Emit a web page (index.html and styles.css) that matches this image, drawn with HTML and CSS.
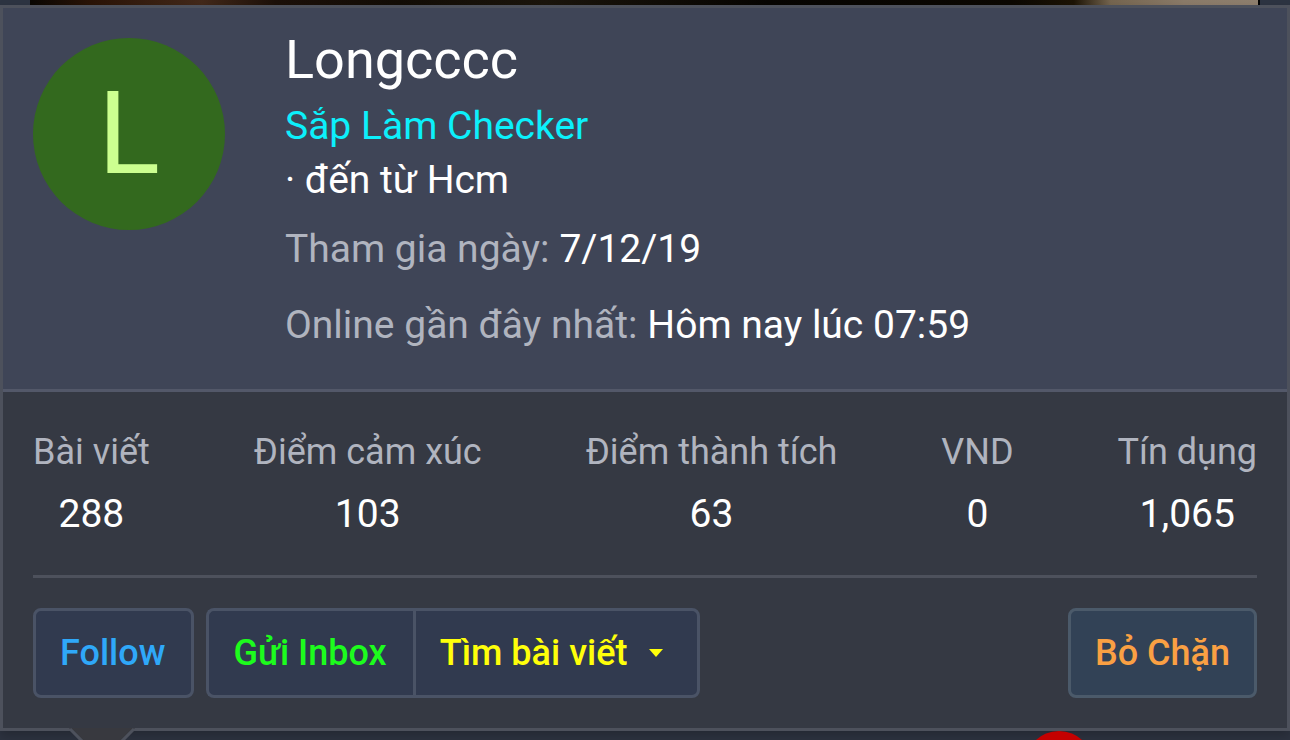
FILE: index.html
```html
<!DOCTYPE html>
<html lang="vi">
<head>
  <meta charset="utf-8">
  <title>Longcccc</title>
  <link rel="stylesheet" href="styles.css">
</head>
<body>
  <div class="cover"><div class="cover-photo"></div></div>
  <div class="memberTooltip">
    <div class="memberTooltip-header">
      <a class="avatar" href="#">L</a>
      <div class="memberTooltip-info">
        <h4 class="memberTooltip-name"><a href="#">Longcccc</a></h4>
        <div class="memberTooltip-title">Sắp Làm Checker</div>
        <div class="memberTooltip-from">· đến từ <a href="#">Hcm</a></div>
        <dl class="pairs">
          <dt>Tham gia ngày:</dt>
          <dd>7/12/19</dd>
        </dl>
        <dl class="pairs">
          <dt>Online gần đây nhất:</dt>
          <dd>Hôm nay lúc 07:59</dd>
        </dl>
      </div>
    </div>
    <div class="memberTooltip-body">
      <div class="stats">
        <dl><dt>Bài viết</dt><dd>288</dd></dl>
        <dl><dt>Điểm cảm xúc</dt><dd>103</dd></dl>
        <dl><dt>Điểm thành tích</dt><dd>63</dd></dl>
        <dl><dt>VND</dt><dd>0</dd></dl>
        <dl><dt>Tín dụng</dt><dd>1,065</dd></dl>
      </div>
      <hr>
      <div class="actions">
        <button class="button follow" type="button">Follow</button>
        <div class="buttonGroup">
          <button class="button inbox" type="button">Gửi Inbox</button>
          <button class="button find" type="button">Tìm bài viết
            <svg class="caret" viewBox="0 0 14 8" width="14" height="8" aria-hidden="true"><path d="M0 0h14L7 8z" fill="currentColor"/></svg>
          </button>
        </div>
        <button class="button block" type="button">Bỏ Chặn</button>
      </div>
    </div>
    <svg class="arrow" viewBox="0 0 66 36" width="66" height="36" aria-hidden="true">
      <path d="M0 0h66L33 33z" fill="#38393f"/>
      <path d="M1 1l32 32L65 1" fill="none" stroke="#4d515c" stroke-width="3"/>
    </svg>
  </div>
  <div class="page">
    <div class="badge"></div>
  </div>
</body>
</html>
```

FILE: styles.css
```css
* {
  box-sizing: border-box;
}
body {
  display: flex;
  flex-direction: column;
  height: 100vh;
  margin: 0;
  overflow: hidden;
  background: #2d3340;
  color: #fff;
  font-family: Roboto, "Noto Sans", sans-serif;
  font-size: 39px;
  line-height: 54px;
}
a {
  color: inherit;
  text-decoration: none;
}
h4, dl, dd {
  margin: 0;
  font-weight: normal;
}

.cover {
  flex: none;
  height: 5px;
  padding: 0 30px;
  background: #2d3442;
}
.cover-photo {
  height: 5px;
  border-right: 2px solid #000;
  background: linear-gradient(to right, #0a0703 0%, #2b1407 5%, #43291a 14%, #1c1009 20%, #130d06 30%, #1b150c 42%, #070502 60%, #0c0802 80%, #1d1405 85%, #75654f 88%, #8b7b69 94%, #8e7f6e 100%);
}

.memberTooltip {
  flex: none;
  position: relative;
  border: 3px solid #4d515c;
  background: #353943;
  box-shadow: 0 5px 10px rgba(0, 0, 0, 0.2);
}
.memberTooltip-header {
  display: flex;
  gap: 60px;
  padding: 30px 30px 37px;
  border-bottom: 3px solid #535869;
  background: #3f4557;
}
.avatar {
  flex: none;
  width: 192px;
  height: 192px;
  border-radius: 50%;
  background: #33691e;
  color: #ccff90;
  font-size: 115px;
  line-height: 192px;
  text-align: center;
}
.memberTooltip-name {
  margin: -8px 0 9px;
  font-size: 54px;
  line-height: 60px;
}
.memberTooltip-title {
  color: #0cf0fb;
}
.memberTooltip-from {
  margin-bottom: 15px;
}
.pairs {
  display: flex;
  flex-wrap: wrap;
  gap: 10px;
}
.pairs + .pairs {
  margin-top: 22px;
}
dt {
  color: #b0b4bf;
}

.memberTooltip-body {
  padding: 30px;
}
.stats {
  display: flex;
  justify-content: space-between;
  padding: 5px 0 34px;
  text-align: center;
}
.stats dt {
  margin-bottom: 10px;
  font-size: 36px;
  line-height: 50px;
}
hr {
  height: 3px;
  margin: 0 0 30px;
  border: 0;
  background: #4d515c;
}

.actions {
  display: flex;
  gap: 12px;
}
.buttonGroup {
  display: flex;
}
.button {
  display: flex;
  align-items: center;
  height: 90px;
  padding: 0 26px 0 24px;
  border: 3px solid #4a5366;
  border-radius: 8px;
  background: #313a4f;
  font: 500 36px/50px Roboto, "Noto Sans", sans-serif;
}
.follow {
  color: #2fa8f9;
}
.inbox {
  border-right: 0;
  border-radius: 8px 0 0 8px;
  color: #1dfc1d;
}
.find {
  border-radius: 0 8px 8px 0;
  color: #ffff0a;
}
.caret {
  margin: 0 8px 0 22px;
}
.block {
  margin-left: auto;
  padding: 0 24px;
  border-color: #4b5a6a;
  background: #324256;
  color: #faa043;
}

.arrow {
  position: absolute;
  top: 100%;
  left: 66px;
}
.page {
  flex: 1;
  position: relative;
  overflow: hidden;
  padding: 0 197px;
}
.badge {
  width: 68px;
  height: 68px;
  margin-left: auto;
  border-radius: 50%;
  background: #c40000;
}
```
